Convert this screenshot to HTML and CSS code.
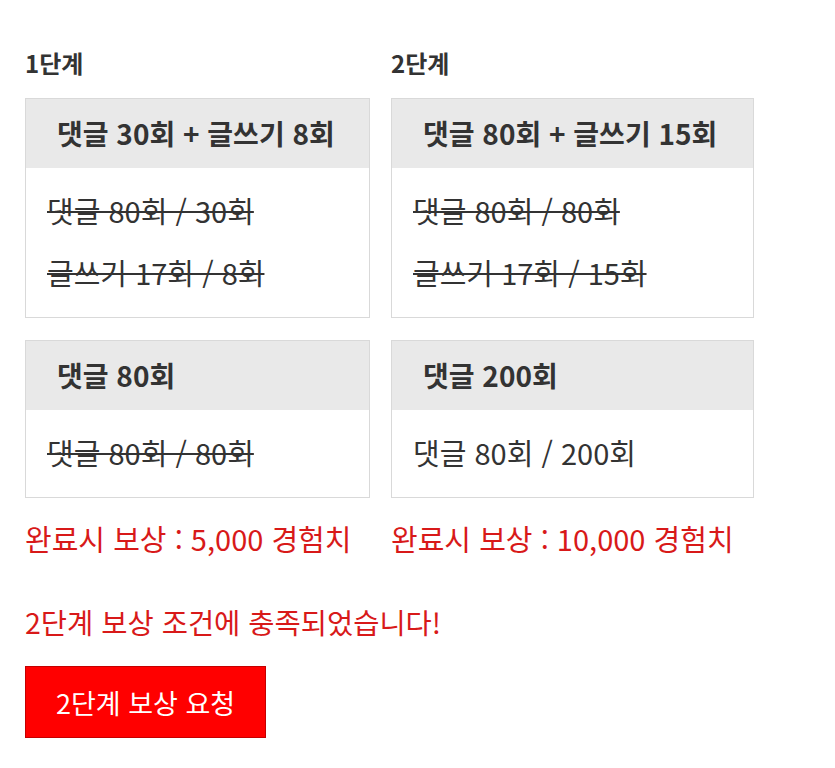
FILE: index.html
```html
<!DOCTYPE html>
<html lang="ko">
<head>
    <meta charset="UTF-8">
    <meta name="viewport" content="width=device-width, initial-scale=1.0">
    <title>단계별 보상</title>
    <link rel="stylesheet" href="styles.css">
</head>
<body>
    <div class="stages">
        <!-- 1단계 -->
        <div class="stage stage-1">
            <h2 class="stage-title">1단계</h2>
            <div class="mission">
                <div class="mission-head">댓글 30회 + 글쓰기 8회</div>
                <div class="mission-body">
                    <p class="done">댓글 80회 / 30회</p>
                    <p class="done">글쓰기 17회 / 8회</p>
                </div>
            </div>
            <div class="mission">
                <div class="mission-head">댓글 80회</div>
                <div class="mission-body">
                    <p class="done">댓글 80회 / 80회</p>
                </div>
            </div>
            <p class="reward">완료시 보상 : 5,000 경험치</p>
        </div>

        <!-- 2단계 -->
        <div class="stage stage-2">
            <h2 class="stage-title">2단계</h2>
            <div class="mission">
                <div class="mission-head">댓글 80회 + 글쓰기 15회</div>
                <div class="mission-body">
                    <p class="done">댓글 80회 / 80회</p>
                    <p class="done">글쓰기 17회 / 15회</p>
                </div>
            </div>
            <div class="mission">
                <div class="mission-head">댓글 200회</div>
                <div class="mission-body">
                    <p>댓글 80회 / 200회</p>
                </div>
            </div>
            <p class="reward">완료시 보상 : 10,000 경험치</p>
        </div>
    </div>

    <p class="notice">2단계 보상 조건에 충족되었습니다!</p>
    <button class="claim-btn">2단계 보상 요청</button>
</body>
</html>
```

FILE: styles.css
```css
body {
    font-family: "Noto Sans CJK KR", "Noto Sans", sans-serif;
    margin: 0;
    padding: 47px 25px 30px;
    background: #fff;
    color: #333;
}

.stages {
    display: flex;
    gap: 21px;
}

.stage {
    display: flex;
    flex-direction: column;
    gap: 22px;
}

.stage-1 {
    width: 345px;
}

.stage-2 {
    width: 363px;
}

.stage-title {
    font-size: 24px;
    font-weight: bold;
    line-height: 32px;
    margin: 0 0 -3px;
    color: #333;
}

.mission {
    border: 1px solid #d9d9d9;
    background: #fff;
}

.mission-head {
    background: #e9e9e9;
    height: 69px;
    line-height: 69px;
    padding: 0 10px 0 31px;
    font-size: 28px;
    font-weight: bold;
    white-space: nowrap;
}

.mission-body {
    padding: 11px 21px 14px;
}

.mission-body p {
    margin: 0;
    font-size: 29px;
    line-height: 62px;
    white-space: nowrap;
}

.done {
    text-decoration: line-through;
    text-decoration-thickness: 2px;
}

.reward {
    margin: -2px 0 0;
    font-size: 29px;
    line-height: 40px;
    color: #d81919;
    white-space: nowrap;
}

.notice {
    margin: 44px 0 0;
    font-size: 28.5px;
    line-height: 40px;
    color: #d81919;
}

.claim-btn {
    margin-top: 24px;
    width: 241px;
    height: 72px;
    background: #ff0000;
    border: 1px solid #c40000;
    color: #fff;
    font-family: inherit;
    font-size: 27px;
    cursor: pointer;
}

.claim-btn:hover {
    opacity: 0.9;
}
```
